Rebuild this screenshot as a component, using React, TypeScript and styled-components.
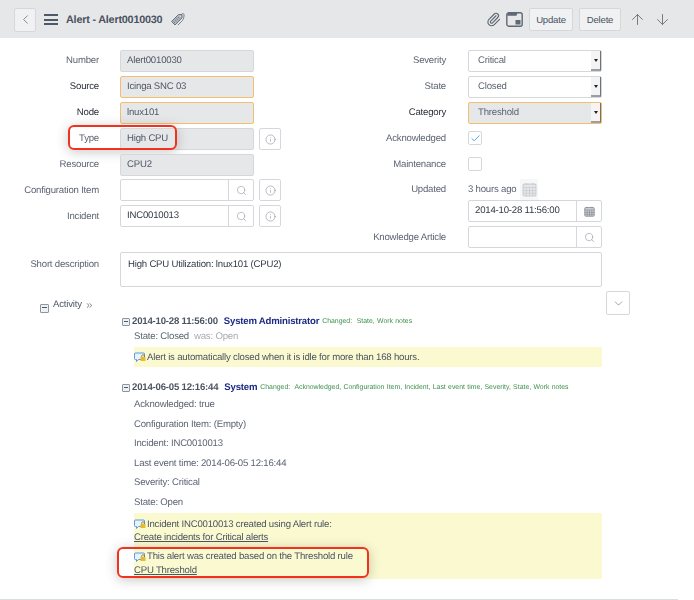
import React from 'react';
import styled, { createGlobalStyle } from 'styled-components';
import {
  ArrowDown,
  ArrowUp,
  Check,
  ChevronDown,
  ChevronLeft,
  ChevronsRight,
  Info,
  Paperclip,
  Search,
} from 'lucide-react';

const GlobalStyle = createGlobalStyle`
  html, body {
    margin: 0;
    padding: 0;
    background: #fff;
    font-family: "Liberation Sans", Arial, sans-serif;
    font-size: 9.6px;
    letter-spacing: -0.2px;
    text-rendering: geometricPrecision;
    color: #4f5866;
  }
`;

const Page = styled.div`
  width: 694px;
  height: 600px;
  overflow: hidden;
  position: relative;
  filter: blur(0.35px);
`;

const Header = styled.div`
  height: 38px;
  box-sizing: border-box;
  background: #e6e7e9;
  display: flex;
  align-items: center;
  padding: 1px 0 0 14px;
`;

const IconButton = styled.div`
  width: 22px;
  height: 22px;
  box-sizing: border-box;
  border: 1px solid #d5d7da;
  border-radius: 2px;
  background: #fff;
  color: #6b7380;
  display: flex;
  align-items: center;
  justify-content: center;
  flex: none;
`;

const BackButton = styled(IconButton)`
  height: 24px;
  background: #f0f1f2;
  margin-right: 8px;
`;

const Burger = styled.div`
  width: 14px;
  height: 11px;
  box-sizing: border-box;
  margin-right: 8px;
  border-top: 2px solid #4f5866;
  border-bottom: 2px solid #4f5866;
  position: relative;

  &::after {
    content: '';
    position: absolute;
    left: 0;
    right: 0;
    top: 2.5px;
    height: 2px;
    background: #4f5866;
  }
`;

const Title = styled.div`
  font-size: 10.8px;
  font-weight: bold;
  color: #49525f;
  margin-right: 8px;
`;

const Actions = styled.div`
  margin-left: auto;
  margin-right: 23px;
  display: flex;
  align-items: center;
  color: #5f6875;
`;

const ClipIcon = styled(Paperclip)`
  margin-right: 5px;
`;

const UpIcon = styled(ArrowUp)`
  margin: 0 8px;
`;

const HeaderButton = styled.button<{ $w: number }>`
  width: ${(p) => p.$w}px;
  height: 23px;
  box-sizing: border-box;
  padding: 0;
  margin: 0 0 1px 6px;
  border: 1px solid #d5d7da;
  border-radius: 2px;
  background: #f0f1f2;
  color: #49525f;
  font: 9.6px "Liberation Sans", Arial, sans-serif;
  letter-spacing: -0.2px;
`;

const FormColumns = styled.div`
  display: grid;
  grid-template-columns: 348px 1fr;
  padding-top: 12px;
`;

const Column = styled.div`
  display: flex;
  flex-direction: column;
`;

const Row = styled.div<{ $h?: number }>`
  height: ${(p) => p.$h ?? 26}px;
  display: flex;
  align-items: flex-start;
  position: relative;
`;

const Label = styled.div<{ $w?: number; $strong?: boolean; $lookup?: boolean }>`
  width: ${(p) => p.$w ?? 99}px;
  margin-right: ${(p) => (p.$w === 98 ? 22 : 21)}px;
  flex: none;
  text-align: right;
  line-height: ${(p) => (p.$lookup ? 23 : 21)}px;
  white-space: nowrap;
  color: ${(p) => (p.$strong ? '#2a2f38' : '#5c6573')};
`;

const DescriptionLabel = styled(Label)`
  padding-top: 1px;
  line-height: 23px;
`;

const Field = styled.div<{ $mandatory?: boolean }>`
  width: 134px;
  height: 22px;
  box-sizing: border-box;
  padding-left: 6px;
  line-height: 20px;
  border-radius: 2px;
  color: #4f5866;
  background: #e6e7e9;
  border: 1px solid ${(p) => (p.$mandatory ? '#f5be6e' : '#d5d7da')};
  flex: none;
`;

const LookupGroup = styled.div`
  width: 134px;
  height: 22px;
  box-sizing: border-box;
  display: flex;
  border: 1px solid #d5d7da;
  border-radius: 2px;
  flex: none;
`;

const LookupValue = styled.div`
  flex: 1;
  padding-left: 6px;
  line-height: 20px;
  color: #333a45;
`;

const LookupIcon = styled.div`
  width: 24px;
  border-left: 1px solid #d5d7da;
  display: flex;
  align-items: center;
  justify-content: center;
  color: #9aa0a8;
`;

const InfoButton = styled(IconButton)`
  margin-left: 5px;
  color: #8a9099;
`;

const Select = styled.div<{ $mandatory?: boolean }>`
  width: 134px;
  height: 22px;
  box-sizing: border-box;
  display: flex;
  border: 1px solid ${(p) => (p.$mandatory ? '#f5be6e' : '#d5d7da')};
  border-radius: 2px;
  background: ${(p) => (p.$mandatory ? '#e6e7e9' : '#fff')};
  flex: none;
`;

const SelectValue = styled.div`
  flex: 1;
  padding-left: 9px;
  line-height: 20px;
  color: #5c6573;
`;

const SelectArrow = styled.div`
  width: 10px;
  background: #f4f4f5;
  border-right: 1px solid #6f7378;
  border-bottom: 2px solid #9b9ea2;
  box-sizing: border-box;
  display: flex;
  align-items: center;
  justify-content: center;

  &::after {
    content: '';
    border-left: 2.5px solid transparent;
    border-right: 2.5px solid transparent;
    border-top: 3px solid #222;
  }
`;

const CheckBox = styled.div`
  width: 14px;
  height: 14px;
  margin-top: 3px;
  box-sizing: border-box;
  border: 1px solid #d5d7da;
  border-radius: 2px;
  color: #3f9be8;
  display: flex;
  align-items: center;
  justify-content: center;
`;

const UpdatedText = styled.div`
  line-height: 21px;
  color: #5c6573;
  margin-right: 4px;
`;

const CalendarTile = styled.div`
  width: 18px;
  height: 21px;
  background: #f7f7f8;
  display: flex;
  align-items: center;
  justify-content: center;
`;

const DescriptionRow = styled.div`
  display: flex;
  align-items: flex-start;
`;

const DescriptionBox = styled.div`
  width: 482px;
  height: 35px;
  box-sizing: border-box;
  border: 1px solid #d5d7da;
  border-radius: 2px;
  padding: 6px 7px;
  color: #333a45;
`;

const ActivityBar = styled.div`
  height: 24px;
  margin-top: 4px;
  padding: 0 64px 0 40px;
  display: flex;
  align-items: flex-start;
  color: #5c6573;
`;

const ActivityTitle = styled.div`
  margin: 8px 0 0 4px;
  display: flex;
  align-items: center;
  gap: 3px;
  line-height: 12px;
  color: #4f5866;
`;

const ToggleBox = styled.div`
  width: 8px;
  height: 8px;
  flex: none;
  box-sizing: border-box;
  border: 1px solid #8b95a3;
  border-radius: 1px;
  background: #eef0f3;
  position: relative;

  &::after {
    content: '';
    position: absolute;
    left: 1px;
    right: 1px;
    top: 2px;
    height: 1px;
    background: #4f5866;
  }
`;

const ActivityToggle = styled(ToggleBox)`
  margin-top: 13px;
  width: 9px;
  height: 9px;
`;

const CollapseButton = styled(IconButton)`
  margin-left: auto;
  width: 24px;
  height: 24px;
`;

const Feed = styled.div`
  padding-left: 122px;
  margin-top: -1px;
`;

const EntryHead = styled.div`
  height: 14px;
  display: flex;
  align-items: center;
  white-space: nowrap;
`;

const EntryToggle = styled(ToggleBox)`
  margin: 1px 2px 0 0;
`;

const EntryDate = styled.span`
  font-weight: bold;
  color: #4b5461;
  margin-right: 6px;
`;

const EntryUser = styled.span`
  font-weight: bold;
  color: #1d2a85;
  margin-right: 3px;
`;

const Changed = styled.span`
  font-size: 6.9px;
  letter-spacing: 0;
  color: #3b8f4b;
  word-spacing: 0.4px;
`;

const ChangeLine = styled.div`
  margin-left: 12px;
  height: 19.6px;
  line-height: 20px;
  color: #5c6573;
  white-space: nowrap;
`;

const FirstChangeLine = styled(ChangeLine)`
  height: 19px;
  line-height: 18px;
`;

const Was = styled.span`
  color: #a6abb2;
  margin-left: 5px;
`;

const Note = styled.div`
  margin-left: 12px;
  width: 468px;
  padding: 4px 0 2.6px;
  background: #fbf9d0;
  color: #4b5461;
  box-sizing: border-box;
  position: relative;
`;

const RuleNote = styled(Note)`
  padding: 5px 0 1.6px;
`;

const NoteLine = styled.div<{ $spaced?: boolean }>`
  height: 13.4px;
  line-height: 13.4px;
  margin-top: ${(p) => (p.$spaced ? 6 : 0)}px;
  display: flex;
  align-items: center;
  gap: 1px;
  white-space: nowrap;
`;

const NoteLink = styled.span`
  text-decoration: underline;
`;

const EntryGap = styled.div`
  height: 14px;
`;

const Highlight = styled.div<{ $l: number; $t: number; $w: number; $h: number }>`
  position: absolute;
  left: ${(p) => p.$l}px;
  top: ${(p) => p.$t}px;
  width: ${(p) => p.$w}px;
  height: ${(p) => p.$h}px;
  box-sizing: border-box;
  border: 2px solid #f0321e;
  border-radius: 6px;
  box-shadow: 0 2px 12px rgba(60, 60, 60, 0.28);
  pointer-events: none;
`;

const BottomRule = styled.div`
  position: absolute;
  left: 0;
  bottom: 0;
  width: 678px;
  height: 1px;
  background: #dcdde0;
`;

const TagIcon = () => (
  <svg width="15" height="15" viewBox="0 0 15 15" fill="none">
    <path d="M1.500 9.500L8.500 2.500h3.500v3.500L5 13z" fill="#aeb3ba" stroke="#6b7380" strokeWidth="1" />
    <path d="M3.500 9.500l1.500 1.500M5 8l1.500 1.500M6.500 6.500L8 8M8 5l1.500 1.500" stroke="#6b7380" strokeWidth="0.7" />
    <circle cx="10.400" cy="4.100" r="0.800" fill="#e6e7e9" />
    <path d="M11 3.500C12 .5 14.500 1 14 4c-.2 1.500-.5 3-1.500 4.500L8 13" stroke="#6b7380" strokeWidth="0.9" />
  </svg>
);

const WindowIcon = () => (
  <svg width="17" height="15" viewBox="0 0 17 15" fill="none">
    <rect x="0.800" y="0.800" width="15.400" height="13.400" rx="2" stroke="#5f6875" strokeWidth="1.400" />
    <path d="M1 3.800h9.500l1-2.800H2z" fill="#5f6875" />
    <rect x="9.500" y="8" width="5" height="4.500" fill="#5f6875" />
  </svg>
);

const CalendarIcon = ({ color, size }: { color: string; size: number }) => (
  <svg width={size} height={size} viewBox="0 0 14 14">
    <rect x="1" y="2" width="12" height="11" rx="1" fill={color} fillOpacity="0.35" stroke={color} />
    <path d="M1 5h12M4 5v8M7 5v8M10 5v8M1 8h12M1 10.500h12M4 1v2M10 1v2" stroke={color} strokeWidth="0.8" />
  </svg>
);

const CommentIcon = () => (
  <svg width="12" height="11" viewBox="0 0 12 11">
    <path d="M1.500 1h8A1 1 0 0 1 10.500 2v4.500a1 1 0 0 1-1 1H4.500L2.500 9.500V7.500h-1a1 1 0 0 1-1-1V2a1 1 0 0 1 1-1z" fill="#e8f2fb" stroke="#4a90d9" strokeWidth="0.9" />
    <rect x="6.500" y="5" width="5" height="4" rx="0.600" fill="#e9b92e" />
    <path d="M7.700 5V4a1.300 1.300 0 0 1 2.600 0v1" fill="none" stroke="#8a6d14" strokeWidth="0.700" />
  </svg>
);

const InfoCell = () => (
  <InfoButton>
    <Info size={11} strokeWidth={1.3} />
  </InfoButton>
);

const SearchCell = () => (
  <LookupIcon>
    <Search size={11} strokeWidth={1.4} />
  </LookupIcon>
);

const App = () => (
  <Page>
    <GlobalStyle />
    <Header>
      <BackButton>
        <ChevronLeft size={15} strokeWidth={1.3} />
      </BackButton>
      <Burger />
      <Title>Alert - Alert0010030</Title>
      <TagIcon />
      <Actions>
        <ClipIcon size={15} strokeWidth={1.8} />
        <WindowIcon />
        <HeaderButton $w={44}>Update</HeaderButton>
        <HeaderButton $w={42}>Delete</HeaderButton>
        <UpIcon size={17} strokeWidth={1.2} />
        <ArrowDown size={17} strokeWidth={1.2} />
      </Actions>
    </Header>

    <FormColumns>
      <Column>
        <Row>
          <Label>Number</Label>
          <Field>Alert0010030</Field>
        </Row>
        <Row>
          <Label $strong>Source</Label>
          <Field $mandatory>Icinga SNC 03</Field>
        </Row>
        <Row>
          <Label $strong>Node</Label>
          <Field $mandatory>lnux101</Field>
        </Row>
        <Row>
          <Label>Type</Label>
          <Field>High CPU</Field>
          <InfoCell />
          <Highlight $l={68} $t={-3} $w={109} $h={25} />
        </Row>
        <Row $h={25}>
          <Label>Resource</Label>
          <Field>CPU2</Field>
        </Row>
        <Row>
          <Label $lookup>Configuration Item</Label>
          <LookupGroup>
            <LookupValue />
            <SearchCell />
          </LookupGroup>
          <InfoCell />
        </Row>
        <Row>
          <Label $lookup>Incident</Label>
          <LookupGroup>
            <LookupValue>INC0010013</LookupValue>
            <SearchCell />
          </LookupGroup>
          <InfoCell />
        </Row>
      </Column>

      <Column>
        <Row>
          <Label $w={98}>Severity</Label>
          <Select><SelectValue>Critical</SelectValue><SelectArrow /></Select>
        </Row>
        <Row>
          <Label $w={98}>State</Label>
          <Select><SelectValue>Closed</SelectValue><SelectArrow /></Select>
        </Row>
        <Row>
          <Label $w={98} $strong>Category</Label>
          <Select $mandatory><SelectValue>Threshold</SelectValue><SelectArrow /></Select>
        </Row>
        <Row>
          <Label $w={98}>Acknowledged</Label>
          <CheckBox><Check size={11} strokeWidth={2} /></CheckBox>
        </Row>
        <Row $h={25}>
          <Label $w={98}>Maintenance</Label>
          <CheckBox />
        </Row>
        <Row $h={21}>
          <Label $w={98}>Updated</Label>
          <UpdatedText>3 hours ago</UpdatedText>
          <CalendarTile><CalendarIcon color="#c9ccd1" size={15} /></CalendarTile>
        </Row>
        <Row>
          <Label $w={98} />
          <LookupGroup>
            <LookupValue>2014-10-28 11:56:00</LookupValue>
            <LookupIcon><CalendarIcon color="#7d838c" size={11} /></LookupIcon>
          </LookupGroup>
        </Row>
        <Row>
          <Label $w={98} $lookup>Knowledge Article</Label>
          <LookupGroup>
            <LookupValue />
            <SearchCell />
          </LookupGroup>
        </Row>
      </Column>
    </FormColumns>

    <DescriptionRow>
      <DescriptionLabel>Short description</DescriptionLabel>
      <DescriptionBox>High CPU Utilization: lnux101 (CPU2)</DescriptionBox>
    </DescriptionRow>

    <ActivityBar>
      <ActivityToggle />
      <ActivityTitle>
        Activity <ChevronsRight size={9} strokeWidth={2} />
      </ActivityTitle>
      <CollapseButton>
        <ChevronDown size={13} strokeWidth={1.2} />
      </CollapseButton>
    </ActivityBar>

    <Feed>
      <EntryHead>
        <EntryToggle />
        <EntryDate>2014-10-28 11:56:00</EntryDate>
        <EntryUser>System Administrator</EntryUser>
        <Changed>Changed:&nbsp; State, Work notes</Changed>
      </EntryHead>
      <FirstChangeLine>
        State: Closed<Was>was: Open</Was>
      </FirstChangeLine>
      <Note>
        <NoteLine>
          <CommentIcon />
          Alert is automatically closed when it is idle for more than 168 hours.
        </NoteLine>
      </Note>
      <EntryGap />
      <EntryHead>
        <EntryToggle />
        <EntryDate>2014-06-05 12:16:44</EntryDate>
        <EntryUser>System</EntryUser>
        <Changed>Changed:&nbsp; Acknowledged, Configuration Item, Incident, Last event time, Severity, State, Work notes</Changed>
      </EntryHead>
      <ChangeLine>Acknowledged: true</ChangeLine>
      <ChangeLine>Configuration Item: (Empty)</ChangeLine>
      <ChangeLine>Incident: INC0010013</ChangeLine>
      <ChangeLine>Last event time: 2014-06-05 12:16:44</ChangeLine>
      <ChangeLine>Severity: Critical</ChangeLine>
      <ChangeLine>State: Open</ChangeLine>
      <RuleNote>
        <NoteLine><CommentIcon />Incident INC0010013 created using Alert rule:</NoteLine>
        <NoteLine><NoteLink>Create incidents for Critical alerts</NoteLink></NoteLine>
        <NoteLine $spaced><CommentIcon />This alert was created based on the Threshold rule</NoteLine>
        <NoteLine><NoteLink>CPU Threshold</NoteLink></NoteLine>
        <Highlight $l={-17} $t={34} $w={252} $h={31} />
      </RuleNote>
    </Feed>
    <BottomRule />
  </Page>
);

export default App;
